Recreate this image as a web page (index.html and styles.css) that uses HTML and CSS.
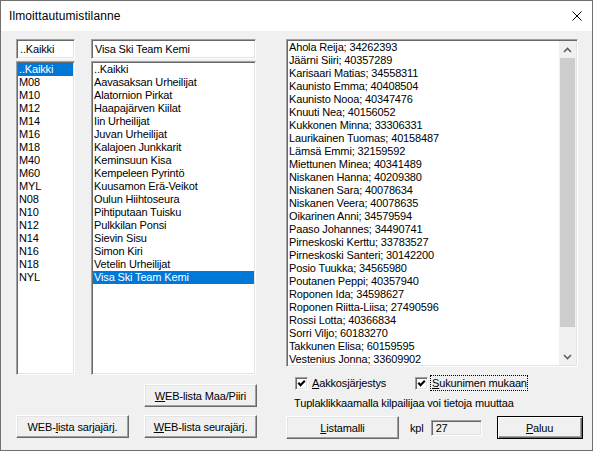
FILE: index.html
```html
<!DOCTYPE html>
<html lang="fi">
<head>
<meta charset="utf-8">
<title>Ilmoittautumistilanne</title>
<link rel="stylesheet" href="styles.css">
</head>
<body>
<div class="window">
  <div class="titlebar">
    <span class="title">Ilmoittautumistilanne</span>
    <span class="close"><svg width="10" height="10" viewBox="0 0 10 10"><path d="M0.5 0.5L9.5 9.5M9.5 0.5L0.5 9.5" stroke="#000" stroke-width="1" fill="none"/></svg></span>
  </div>
  <div class="content">
    <div class="left">
      <div class="lists">
        <div class="col col-cat">
          <div class="edit sunken">..Kaikki</div>
          <div class="list sunken">
            <div class="item sel">..Kaikki</div>
            <div class="item">M08</div>
            <div class="item">M10</div>
            <div class="item">M12</div>
            <div class="item">M14</div>
            <div class="item">M16</div>
            <div class="item">M18</div>
            <div class="item">M40</div>
            <div class="item">M60</div>
            <div class="item">MYL</div>
            <div class="item">N08</div>
            <div class="item">N10</div>
            <div class="item">N12</div>
            <div class="item">N14</div>
            <div class="item">N16</div>
            <div class="item">N18</div>
            <div class="item">NYL</div>
          </div>
        </div>
        <div class="col col-club">
          <div class="edit sunken">Visa Ski Team Kemi</div>
          <div class="list sunken">
            <div class="item">..Kaikki</div>
            <div class="item">Aavasaksan Urheilijat</div>
            <div class="item">Alatornion Pirkat</div>
            <div class="item">Haapajärven Kiilat</div>
            <div class="item">Iin Urheilijat</div>
            <div class="item">Juvan Urheilijat</div>
            <div class="item">Kalajoen Junkkarit</div>
            <div class="item">Keminsuun Kisa</div>
            <div class="item">Kempeleen Pyrintö</div>
            <div class="item">Kuusamon Erä-Veikot</div>
            <div class="item">Oulun Hiihtoseura</div>
            <div class="item">Pihtiputaan Tuisku</div>
            <div class="item">Pulkkilan Ponsi</div>
            <div class="item">Sievin Sisu</div>
            <div class="item">Simon Kiri</div>
            <div class="item">Vetelin Urheilijat</div>
            <div class="item sel">Visa Ski Team Kemi</div>
          </div>
        </div>
      </div>
      <div class="btn btn-maa"><span><u>W</u>EB-lista Maa/Piiri</span></div>
      <div class="btnrow">
        <div class="btn"><span>WEB-<u>l</u>ista sarjajärj.</span></div>
        <div class="btn"><span><u>W</u>EB-lista seurajärj.</span></div>
      </div>
    </div>
    <div class="right">
      <div class="names sunken">
        <div class="names-items">
          <div class="item">Ahola Reija; 34262393</div>
          <div class="item">Jäärni Siiri; 40357289</div>
          <div class="item">Karisaari Matias; 34558311</div>
          <div class="item">Kaunisto Emma; 40408504</div>
          <div class="item">Kaunisto Nooa; 40347476</div>
          <div class="item">Knuuti Nea; 40156052</div>
          <div class="item">Kukkonen Minna; 33306331</div>
          <div class="item">Laurikainen Tuomas; 40158487</div>
          <div class="item">Lämsä Emmi; 32159592</div>
          <div class="item">Miettunen Minea; 40341489</div>
          <div class="item">Niskanen Hanna; 40209380</div>
          <div class="item">Niskanen Sara; 40078634</div>
          <div class="item">Niskanen Veera; 40078635</div>
          <div class="item">Oikarinen Anni; 34579594</div>
          <div class="item">Paaso Johannes; 34490741</div>
          <div class="item">Pirneskoski Kerttu; 33783527</div>
          <div class="item">Pirneskoski Santeri; 30142200</div>
          <div class="item">Posio Tuukka; 34565980</div>
          <div class="item">Poutanen Peppi; 40357940</div>
          <div class="item">Roponen Ida; 34598627</div>
          <div class="item">Roponen Riitta-Liisa; 27490596</div>
          <div class="item">Rossi Lotta; 40366834</div>
          <div class="item">Sorri Viljo; 60183270</div>
          <div class="item">Takkunen Elisa; 60159595</div>
          <div class="item">Vestenius Jonna; 33609902</div>
        </div>
        <div class="scrollbar">
          <div class="sb-btn"><svg width="9" height="6" viewBox="0 0 9 6"><path d="M1 5L4.5 1.5L8 5" stroke="#606060" stroke-width="1.6" fill="none"/></svg></div>
          <div class="sb-thumb"></div>
          <div class="sb-track"></div>
          <div class="sb-btn"><svg width="9" height="6" viewBox="0 0 9 6"><path d="M1 1L4.5 4.5L8 1" stroke="#606060" stroke-width="1.6" fill="none"/></svg></div>
        </div>
      </div>
      <div class="checks">
        <div class="chk chk1">
          <span class="box"><svg width="9" height="9" viewBox="0 0 9 9"><path d="M1.3 3.8L3.5 6.2L7.8 1.8" stroke="#000" stroke-width="2.1" fill="none"/></svg></span>
          <span class="lbl"><u>A</u>akkosjärjestys</span>
        </div>
        <div class="chk">
          <span class="box"><svg width="9" height="9" viewBox="0 0 9 9"><path d="M1.3 3.8L3.5 6.2L7.8 1.8" stroke="#000" stroke-width="2.1" fill="none"/></svg></span>
          <span class="lbl focus"><u>S</u>ukunimen mukaan</span>
        </div>
      </div>
      <div class="hint">Tuplaklikkaamalla kilpailijaa voi tietoja muuttaa</div>
      <div class="bottom">
        <div class="btn"><span><u>L</u>istamalli</span></div>
        <span class="kpl">kpl</span>
        <div class="field">27</div>
        <div class="btn btn-default"><span><u>P</u>aluu</span></div>
      </div>
    </div>
  </div>
</div>
</body>
</html>
```
FILE: styles.css
```css
body {
  margin: 0;
  font-family: "Liberation Sans", Arial, sans-serif;
  font-size: 11px;
  color: #000;
  letter-spacing: -0.15px;
}
.window {
  width: 593px;
  height: 451px;
  box-sizing: border-box;
  border: 1px solid #707070;
  background: #f0f0f0;
  display: flex;
  flex-direction: column;
  overflow: hidden;
}
.titlebar {
  flex: none;
  height: 30px;
  background: #fff;
  display: flex;
  align-items: center;
  padding-left: 8px;
}
.title {
  font-size: 12px;
  letter-spacing: 0.1px;
}
.close {
  margin-left: auto;
  margin-right: 10px;
  display: flex;
}
.content {
  display: flex;
  padding: 8px 0 0 15px;
}
.left {
  width: 241px;
  display: flex;
  flex-direction: column;
}
.lists {
  display: flex;
  gap: 16px;
}
.col {
  display: flex;
  flex-direction: column;
  gap: 2px;
}
.col-cat { width: 59px; }
.col-club { width: 165px; }
.sunken {
  box-sizing: border-box;
  background: #fff;
  border: 1px solid;
  border-color: #a0a0a0 #fff #fff #a0a0a0;
  box-shadow: inset 1px 1px 0 #696969, inset -1px -1px 0 #e3e3e3;
  padding: 1px;
}
.edit {
  height: 20px;
  line-height: 16px;
  padding-left: 3px;
  white-space: nowrap;
  overflow: hidden;
}
.list {
  height: 314px;
  overflow: hidden;
}
.item {
  height: 13px;
  line-height: 13px;
  padding-left: 1px;
  white-space: nowrap;
}
.sel {
  background: #0078d7;
  color: #fff;
}
.btn {
  box-sizing: border-box;
  width: 113px;
  height: 23px;
  background: #f0f0f0;
  border: 1px solid;
  border-color: #fff #696969 #696969 #fff;
  box-shadow: inset -1px -1px 0 #a0a0a0, inset 1px 1px 0 #e3e3e3;
  display: flex;
  align-items: center;
  justify-content: center;
  white-space: nowrap;
}
.btn-maa {
  align-self: flex-end;
  margin-top: 9px;
}
.btnrow {
  display: flex;
  justify-content: space-between;
  margin-top: 8px;
}
.right {
  margin-left: 29px;
  width: 297px;
  display: flex;
  flex-direction: column;
}
.names {
  width: 292px;
  height: 328px;
  display: flex;
}
.names-items {
  flex: 1;
  overflow: hidden;
}
.scrollbar {
  width: 17px;
  background: #f0f0f0;
  display: flex;
  flex-direction: column;
}
.sb-btn {
  height: 17px;
  display: flex;
  align-items: center;
  justify-content: center;
}
.sb-thumb {
  height: 269px;
  margin: 0 1px;
  background: #cdcdcd;
}
.sb-track { flex: 1; }
.checks {
  display: flex;
  align-items: center;
  height: 18px;
  margin-top: 7px;
  padding-left: 9px;
}
.chk {
  display: flex;
  align-items: center;
}
.chk1 { width: 120px; }
.box {
  width: 13px;
  height: 13px;
  box-sizing: border-box;
  background: #fff;
  border: 1px solid;
  border-color: #a0a0a0 #fff #fff #a0a0a0;
  box-shadow: inset 1px 1px 0 #696969, inset -1px -1px 0 #e3e3e3;
  display: flex;
  align-items: center;
  justify-content: center;
}
.lbl {
  margin-left: 4px;
  line-height: 13px;
}
.focus {
  margin-left: 2px;
  border: 1px dotted #000;
  padding: 1px 0 0 1px;
}
.hint {
  margin-top: 5px;
  line-height: 13px;
  padding-left: 8px;
}
.bottom {
  display: flex;
  align-items: center;
  margin-top: 6px;
  height: 23px;
}
.kpl { margin-left: 11px; }
.field {
  margin-left: 7px;
  width: 51px;
  height: 16px;
  box-sizing: border-box;
  border: 1px solid;
  border-color: #a0a0a0 #fff #fff #a0a0a0;
  box-shadow: inset 1px 1px 0 #696969, inset -1px -1px 0 #e3e3e3;
  padding-left: 4px;
  line-height: 14px;
}
.btn-default {
  margin-left: 15px;
  width: 86px;
  border: 1px solid #000;
  box-shadow: inset 1px 1px 0 #fff, inset -1px -1px 0 #696969, inset -2px -2px 0 #a0a0a0;
}
```
